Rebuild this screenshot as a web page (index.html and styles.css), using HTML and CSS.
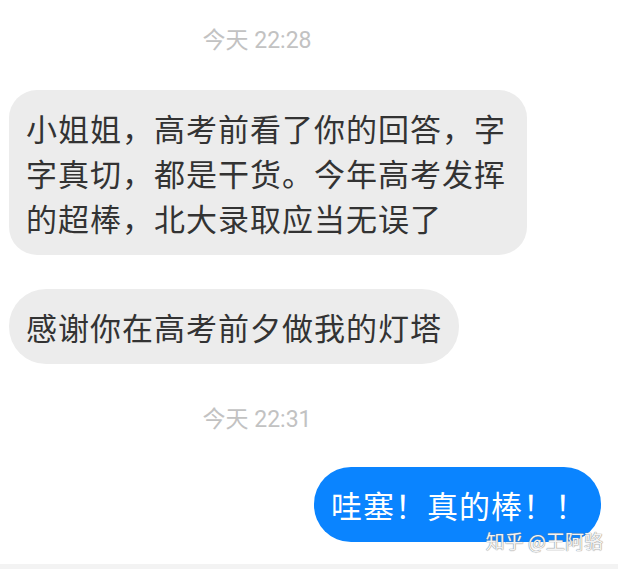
FILE: index.html
```html
<!DOCTYPE html>
<html lang="zh-CN">
<head>
  <meta charset="UTF-8">
  <meta name="viewport" content="width=device-width, initial-scale=1.0">
  <title>聊天记录</title>
  <link rel="stylesheet" href="styles.css">
</head>
<body>
  <main class="chat">
    <div class="time">今天 22:28</div>

    <div class="row">
      <div class="bubble bubble-in bubble-long">小姐姐，高考前看了你的回答，字字真切，都是干货。今年高考发挥的超棒，北大录取应当无误了</div>
    </div>

    <div class="row">
      <div class="bubble bubble-in">感谢你在高考前夕做我的灯塔</div>
    </div>

    <div class="time time-second">今天 22:31</div>

    <div class="row row-out">
      <div class="bubble bubble-out">哇塞！真的棒！！</div>
    </div>

    <div class="watermark">知乎 @王阿骆</div>
  </main>
  <div class="bottom-bar"></div>
</body>
</html>
```

FILE: styles.css
```css
:root {
  --bubble-gray: #ececec;
  --bubble-blue: #0a84ff;
  --text: #333333;
  --time: #c2c2c2;
}

* {
  margin: 0;
  padding: 0;
  box-sizing: border-box;
}

body {
  background: #ffffff;
  font-family: 'Noto Sans CJK SC', sans-serif;
  color: var(--text);
  height: 569px;
  overflow: hidden;
  display: flex;
  flex-direction: column;
}

.chat {
  position: relative;
  flex: 1;
  padding-top: 26px;
  display: flex;
  flex-direction: column;
}

.time {
  width: 514px;
  text-align: center;
  font-family: 'Roboto', 'Noto Sans CJK SC', sans-serif;
  font-size: 23px;
  line-height: 30px;
  color: var(--time);
  margin-bottom: 34px;
}

/* row margins don't collapse inside the flex column */
.time-second {
  margin-top: 7px;
  margin-bottom: 32px;
}

.row {
  display: flex;
  padding: 0 17px 0 9px;
  margin-bottom: 34px;
}

.row-out {
  justify-content: flex-end;
  margin-bottom: 0;
}

.bubble {
  font-size: 31px;
  letter-spacing: 1px;
  line-height: 45px;
  padding: 15px 17px;
  border-radius: 37px;
}

.bubble-in {
  background: var(--bubble-gray);
  color: var(--text);
}

.bubble-long {
  max-width: 518px;
  border-radius: 28px;
}

.bubble-out {
  background: var(--bubble-blue);
  color: #ffffff;
  padding: 15px 14px 15px 17px;
}

.watermark {
  position: absolute;
  right: 15px;
  top: 528px;
  font-size: 19px;
  line-height: 26px;
  color: rgba(255, 255, 255, 0.92);
  text-shadow: 0 0 1px #888, 0 0 1px #888;
}

.bottom-bar {
  height: 5px;
  background: #f3f3f3;
}
```
